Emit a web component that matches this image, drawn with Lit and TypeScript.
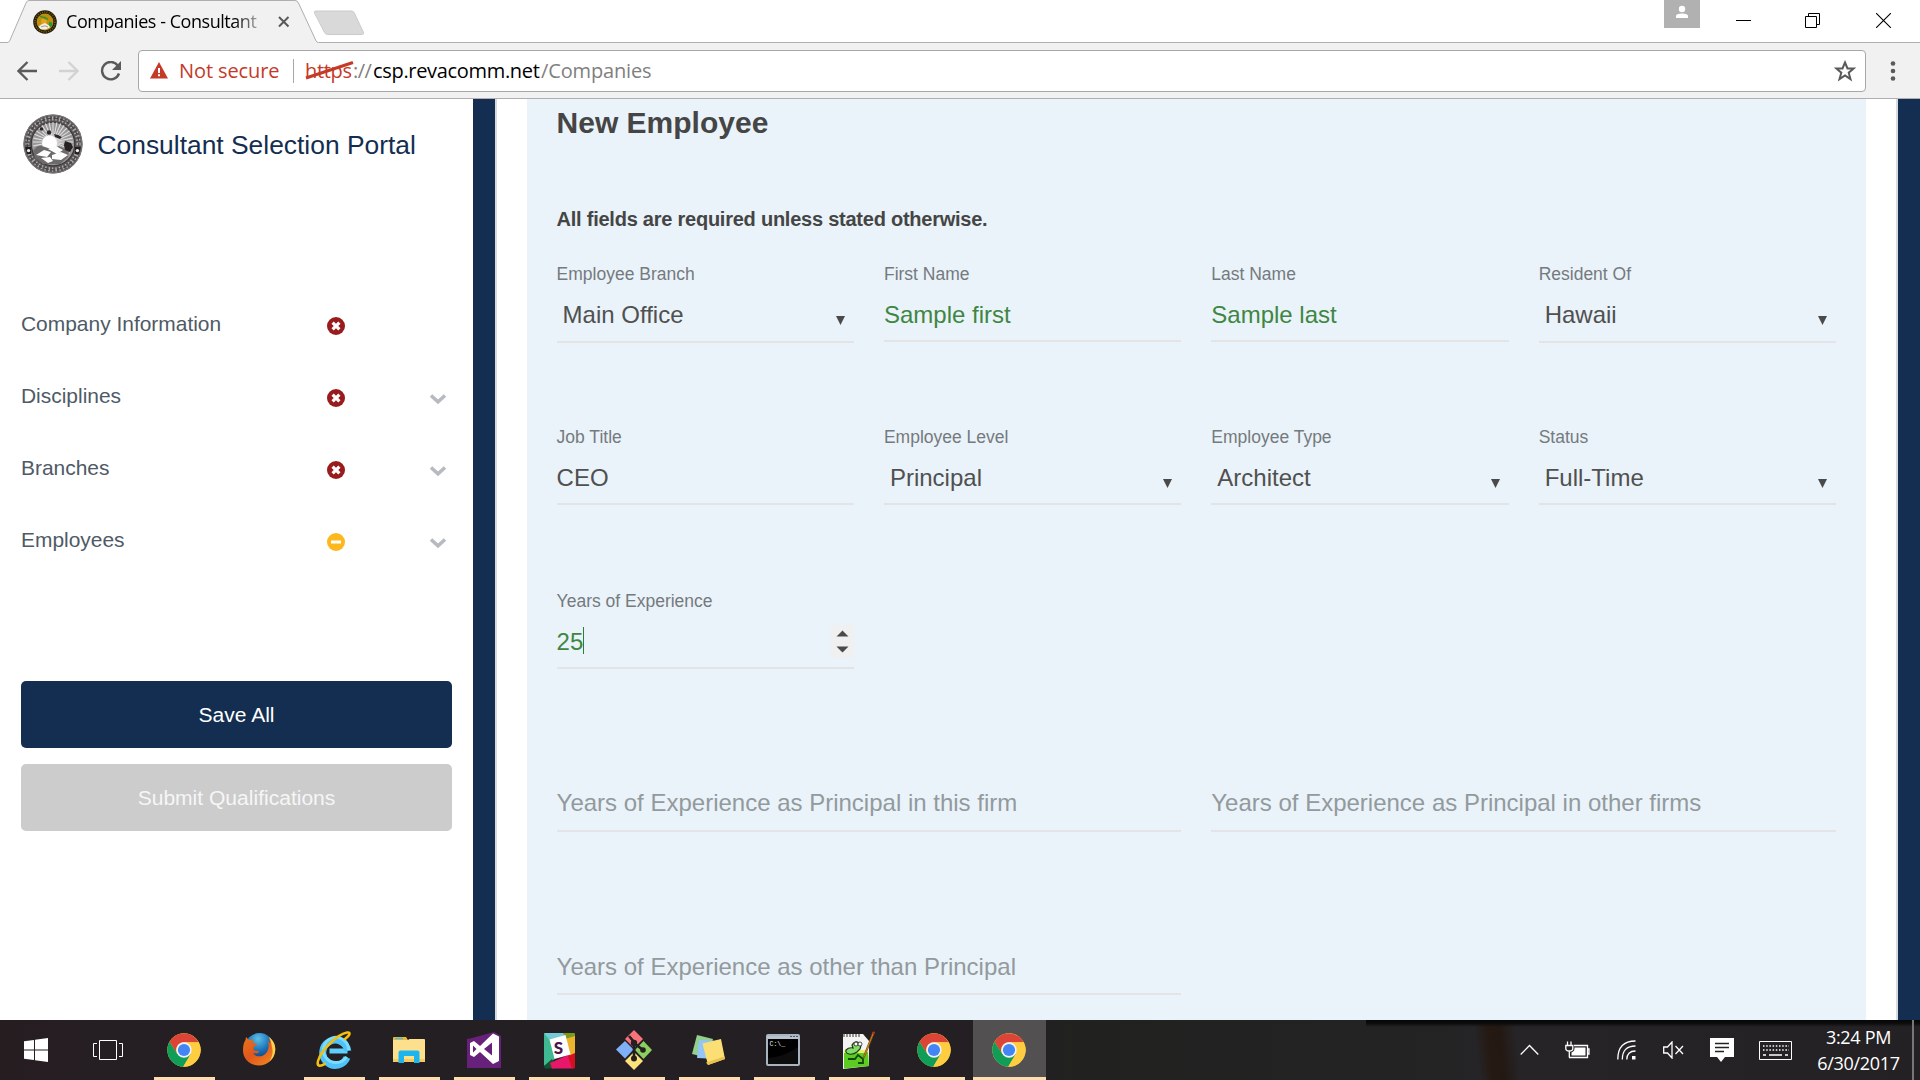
import { LitElement, html, svg, css, nothing } from "lit";
import { customElement, property } from "lit/decorators.js";
import { classMap } from "lit/directives/class-map.js";

/* ---------- artwork ---------- */

const rays = Array.from({ length: 32 }, (_, i) => {
  const a = (i * Math.PI) / 16;
  return svg`<line x1="30" y1="28" x2=${30 + 20 * Math.cos(a)} y2=${28 + 20 * Math.sin(a)} stroke="#dedede" stroke-width="1.1"/>`;
});

const seal = html`<svg width="60" height="60" viewBox="0 0 60 60">
  <circle cx="30" cy="30" r="29.6" fill="#5a5658"/>
  <circle cx="30" cy="30" r="25.6" fill="none" stroke="#aeacad" stroke-width="4.2" stroke-dasharray="1.5 2.1"/>
  <circle cx="30" cy="30" r="25.8" fill="none" stroke="#454143" stroke-width="1.2" stroke-dasharray="4 2.4"/>
  <circle cx="30" cy="30" r="29" fill="none" stroke="#7b797a" stroke-width="1"/>
  <circle cx="30" cy="30" r="21.8" fill="#989697" stroke="#3d393b" stroke-width="1.3"/>
  ${rays}
  <circle cx="26.5" cy="29" r="7.5" fill="#fff"/>
  <path d="M10 37q4-6 9-5l9 3 8-3 10 5-1 6-8 7H20l-8-6z" fill="#6d6a6c"/>
  <path d="M13 41l8-5 7 2-4 5zM25 35l8-3 7 4-6 4zM29 41l9-3 7 3-7 5-9-1zM18 44l9-1 3 4-5 2z" fill="#fdfdfd"/>
  <path d="M42 27l6 2 2 4-3 5-5-2-1-5z" fill="#262224"/>
  <circle cx="18.5" cy="15" r="1.8" fill="#2c282a"/><circle cx="26" cy="18.5" r="2.2" fill="#2c282a"/>
  <path d="M31 20l4 1 4 2-2 2-5-2z" fill="#2c282a"/>
  <path d="M2 33h6v7H4zM52 33h6l-2 7h-4z" fill="#221e20"/>
  <circle cx="5.6" cy="36.6" r="1.7" fill="#eee"/><circle cx="54.4" cy="36.6" r="1.7" fill="#eee"/>
</svg>`;

const favicon = html`<svg width="24" height="24" viewBox="0 0 24 24">
  <circle cx="12" cy="12" r="11.8" fill="#221c08"/>
  <circle cx="12" cy="12" r="10" fill="none" stroke="#7a6518" stroke-width="1.6" stroke-dasharray="1 1.3"/>
  <circle cx="12" cy="12" r="8.4" fill="#c08f10"/>
  <circle cx="11" cy="11.5" r="3" fill="#e2a51c"/>
  <path d="M7 6.2l3 1 3 1.6M11 7l4 2.3" stroke="#3f8f2c" stroke-width="1.5" fill="none"/>
  <path d="M16 12l3 .4.6 2.6-2 2-1.8-1.8z" fill="#1e9a3a"/>
  <path d="M5.5 16.5l3.5-2.2 3-1.3 4 2.4 1 2-4.5 2.2-5-.4z" fill="#f2f0e8"/>
  <path d="M8 16.8l4-1 3 1.2" stroke="#8a8578" stroke-width=".8" fill="none"/>
</svg>`;

const chrome = html`<svg width="36" height="36" viewBox="0 0 36 36">
  <circle cx="18" cy="18" r="16.7" fill="#ffcd40"/>
  <path d="M3.5 9.7A16.7 16.7 0 0 1 32.6 10.2H18a7.8 7.8 0 0 0-6.8 11.7z" fill="#db4437"/>
  <path d="M3.5 9.7A16.7 16.7 0 0 0 17.2 34.7L24.8 21.9 11.3 21.9z" fill="#0f9d58"/>
  <path d="M17.2 34.7A16.7 16.7 0 0 0 32.6 10.2H18l6.8 11.7z" fill="#ffcd40"/>
  <circle cx="18" cy="18" r="7.7" fill="#f1f1f1"/><circle cx="18" cy="18" r="6.1" fill="#4285f4"/>
</svg>`;

const firefox = html`<svg width="36" height="36" viewBox="0 0 36 36">
  <defs>
    <linearGradient id="ffg" x1="0" y1="0" x2="0.9" y2="1"><stop offset="0" stop-color="#e8741c"/><stop offset=".5" stop-color="#e2571c"/><stop offset="1" stop-color="#f08a20"/></linearGradient>
    <radialGradient id="ffb" cx=".45" cy=".2" r=".8"><stop offset="0" stop-color="#5fc0ea"/><stop offset=".5" stop-color="#1c72b8"/><stop offset="1" stop-color="#0d2f66"/></radialGradient>
  </defs>
  <circle cx="18.5" cy="15.5" r="14.5" fill="url(#ffb)"/>
  <path d="M28 5c5 4 7 9 6 15-1.500 8-8 13.500-16 13.500C9 33.500 2 27 2 18.500 2 13 3 10 4.500 8L5 5l3 3c2-.8 3.500-.7 5 0-1 .8-1.700 1.800-1.600 3l4.600.7c.3 1.300-2.500 2.500-3.500 3.300.6 1.800 0 2.600 0 3.500 2-.8 4 .9 6 1-1.500 2-4.500 2.300-6.500 1.300 2.500 4.600 9 4.500 12.500 1 3.500-3.600 4-9 2-12.500 1 .5 2 1.500 2.500 2.500C29 9.500 28.500 7 28 5z" fill="url(#ffg)"/>
  <path d="M28 5c5 4 7 9 6 15-.7 4-2.700 7.200-5.500 9.500 3-5 4-10 2.200-15.500C30.500 11 29.500 8 28 5z" fill="#fbd24b"/>
</svg>`;

const ie = html`<svg width="38" height="38" viewBox="0 0 38 38">
  <path d="M32.500 20H14.500" stroke="#5fd0fb" stroke-width="5"/>
  <path d="M32 26.500A12.600 12.600 0 1 1 32.800 20" fill="none" stroke="#4fc3f7" stroke-width="7"/>
  <path d="M31.600 25.800A12.600 12.600 0 1 1 33.600 19" fill="none" stroke="#7adcff" stroke-width="3"/>
  <path d="M30 8c6-5 5.500-7 2-6.500C23 3 6 19 3 30c-1.400 5 1.500 6 7 2.800" fill="none" stroke="#f4bf0e" stroke-width="2.500" stroke-linecap="round"/>
</svg>`;

const folder = html`<svg width="36" height="34" viewBox="0 0 36 34">
  <path d="M2 5q0-1 1-1h12l2 3h-15z" fill="#f0b92f"/><path d="M2 7h15l1.500-1H33q1 0 1 1v21q0 1-1 1H3q-1 0-1-1z" fill="#fde08d"/>
  <path d="M4 5.500h8" stroke="#4bb9e8" stroke-width="1.500"/><path d="M2 26h32v3H2z" fill="#f2cb62"/>
  <path d="M7.500 30V19.500q0-2 2-2h17q2 0 2 2V30h-5.500v-7H13v7z" fill="#1cb5ef"/>
</svg>`;

const visualStudio = html`<svg width="36" height="38" viewBox="0 0 36 38">
  <path d="M1 8l5-1L28 1l7 4v32H1z" fill="#68217a"/>
  <path fill-rule="evenodd" d="M4 12l4-2 6 5L27 2.500l6 3V30l-6 3-13-12-6 5-4-2zM7 14.500v7l3.500-3.500zM26 11.500L18 18l8 6.500z" fill="#fff"/>
</svg>`;

const slack = html`<svg width="33" height="37" viewBox="0 0 33 37">
  <path d="M1 2q0-1 1-1h19l2 5L7 10 1 18z" fill="#74cbd6"/><path d="M20 1h11q1 0 1 1v4l-9 3z" fill="#7e9a1d"/>
  <path d="M22 7l10-3v21l-6 1z" fill="#ecb32d"/><path d="M1 1l7 9 4 17-11 7z" fill="#3eb991"/>
  <path d="M1 34l8-7 5 9.500H2z" fill="#14532f"/><path d="M7 31l20-9 3 14.500H9z" fill="#e9176a"/><path d="M25 24l7-3v14q0 1.500-1 1.500h-2z" fill="#d4101f"/>
  <path d="M6.500 7.500l16-4.500 5 19.500-16 4.500z" fill="#fff"/><text x="10.800" y="22" class="s">S</text>
</svg>`;

const git = html`<svg width="38" height="42" viewBox="0 0 38 42">
  <path d="M19 1l9 9-9 9-9-9z" fill="#f9737a"/><path d="M10 12l8.500 8.500L10 29.500 1 20.500z" fill="#7fb1f9"/>
  <path d="M28.500 12l8.500 9-8.500 9L20 21z" fill="#8bd05f"/><path d="M19 23l9 9-9 9-9-9z" fill="#fbe27a"/>
  <path d="M14 7l5 6v15M19 14l9 7" stroke="#241f22" stroke-width="2.600" fill="none"/>
  <circle cx="19" cy="14" r="3.200" fill="#241f22"/><circle cx="28" cy="21" r="2.800" fill="#241f22"/><circle cx="19" cy="29.500" r="3" fill="#241f22"/>
</svg>`;

const notes = html`<svg width="38" height="34" viewBox="0 0 38 34">
  <path d="M7 2l16 4-5 19-16-4z" fill="#93cf8d"/><path d="M9 7l19 1-1 18-20-1z" fill="#93c6f6"/>
  <path d="M12.500 10.500L31 6l4 20-17 6z" fill="#fbdf75"/><path d="M16 29.500L34.500 23.500 35 26l-17 6z" fill="#e9c04c"/>
</svg>`;

const terminal = html`<svg width="36" height="32" viewBox="0 0 36 32">
  <rect x="1" y="1" width="32" height="30" rx="1" fill="#000" stroke="#a9b4bf" stroke-width="2"/><path d="M1 2h32v3H1z" fill="#b8c2cc"/>
  <path d="M24 2.500h2m1 0h2m1 0h2" stroke="#556"/><text x="3.500" y="12" class="p">C:\\_</text>
  <path d="M2 24q16-1 30-11v17H2z" fill="#fff" opacity=".05"/>
</svg>`;

const notepad = html`<svg width="36" height="40" viewBox="0 0 36 40">
  <path d="M2 4h20l6 7v25L2 39z" fill="#f4f4f2"/><path d="M3 4v3m3-3v3m3-3v3m3-3v3m3-3v3m3-3v3" stroke="#555" stroke-width="1.200"/>
  <path d="M3 22h24l1 14-25 2.500z" fill="#5ccb22"/><path d="M3 21.500h23" stroke="#e9ef6a" stroke-width="3"/>
  <path d="M11 15q3-5 7-2 3 1 1 6l-3 3q-4 3-8 2-4-1-3-4 3-3 7-2z" fill="#86d96b" stroke="#1b3d12" stroke-width="1.200"/>
  <circle cx="15" cy="14" r="2" fill="#fff" stroke="#222" stroke-width=".8"/><circle cx="19" cy="14" r="2" fill="#fff" stroke="#222" stroke-width=".8"/>
  <path d="M7 29h7l3-4 5 4v4h-5" stroke="#124a0c" stroke-width="1.800" fill="none"/>
  <path d="M33.500 2L24 26l-1.500 3 .3-3.500L32 2z" fill="#f0a020" stroke="#7a4a10" stroke-width=".8"/><path d="M32 1.500l2 .8-1 2.500-2-.8z" fill="#c03020"/>
</svg>`;

const startIcon = html`<svg width="24" height="24" viewBox="0 0 24 24"><path d="M0 3.300L10 2v9.500H0zM11 1.800L24 0v11.500H11zM0 12.500h10V22L0 20.700zM11 12.500h13V24l-13-1.800z" fill="#fff"/></svg>`;
const taskView = html`<svg width="30" height="20" viewBox="0 0 30 20"><path d="M6.500.5h17v19h-17zM4 3.500H.5v13H4M26 3.500h3.500v13H26" fill="none" stroke="#fff"/></svg>`;

const apps = [
  { icon: chrome, open: true }, { icon: firefox, open: false }, { icon: ie, open: true }, { icon: folder, open: true },
  { icon: visualStudio, open: true }, { icon: slack, open: true }, { icon: git, open: true }, { icon: notes, open: true },
  { icon: terminal, open: true }, { icon: notepad, open: true }, { icon: chrome, open: true }, { icon: chrome, open: true, active: true },
];

/* ---------- browser frame ---------- */

@customElement("browser-bar")
class BrowserBar extends LitElement {
  static styles = css`
    :host { display: flex; flex-direction: column; height: 99px; flex: none; background: #f1f1f1; font-family: "Open Sans", "Noto Sans", sans-serif; color: #000; }
    svg { display: block; flex: none; }
    .strip { position: relative; display: flex; height: 43px; background: #fff; }
    .shape { position: absolute; left: 0; top: 0; }
    .tab { position: relative; display: flex; align-items: center; width: 290px; height: 43px; padding-left: 33px; box-sizing: border-box; }
    .name { width: 198px; margin-left: 9px; font-size: 18px; letter-spacing: -0.46px; line-height: 25px; white-space: nowrap; margin-top: -1px;
      -webkit-mask-image: linear-gradient(90deg, #000 168px, transparent 202px); }
    .x { margin-left: 15px; }
    .system { position: relative; display: flex; margin-left: auto; }
    .user { width: 36px; height: 28px; background: #b1b1b1; display: flex; justify-content: center; }
    .controls { display: flex; gap: 54px; padding: 13px 29px 0 36px; }
    .close { margin-left: 2px; }
    .toolbar { display: flex; align-items: center; height: 55px; border-bottom: 1px solid #b0aeb0; padding: 0 23px 0 17px; }
    .nav { display: flex; align-items: center; gap: 21.5px; width: 121px; }
    .address { display: flex; align-items: center; flex: 1; height: 40px; border: 1px solid #a9a7a8; border-radius: 4px; background: #fff; font-size: 20px; white-space: nowrap; padding-right: 9px; }
    .address svg.warn { margin-left: 11px; }
    .ns { color: #c53929; width: 114px; margin-left: 11px; letter-spacing: -0.1px; flex: none; }
    .sep { width: 1px; height: 24px; background: #a8a8a8; margin-right: 11px; }
    .https { position: relative; width: 48px; color: #c53929; letter-spacing: -0.3px; }
    .strike { position: absolute; left: 0; top: 3px; }
    .slash { width: 20px; color: #808080; letter-spacing: -0.6px; }
    .host { width: 168px; letter-spacing: -0.32px; }
    .path { color: #808080; letter-spacing: -0.15px; }
    .star { margin-left: auto; }
    .dots { margin-left: 23px; }
  `;
  render() {
    return html`
      <div class="strip">
        <svg class="shape" width="1920" height="43" viewBox="0 0 1920 43">
          <path d="M0 43V42.500H7q2 0 2.700-1.700L26 3q1-2.500 3-2.500H295q2.500 0 3.500 2.500L316 40.800q.8 1.700 2.500 1.700H1920V43z" fill="#f1f1f1"/>
          <path d="M0 42.500H7q2 0 2.700-1.700L26 3q1-2.500 3-2.500H295q2.500 0 3.500 2.500L316 40.800q.8 1.700 2.500 1.700H1920" fill="none" stroke="#b0aeb0"/>
          <path d="M316 11h35.500q2 0 2.800 2l9 19q1 2.500-1 2.500H327.500q-2 0-3-2L314.500 13q-1-2 1.500-2z" fill="#d9d9d9" stroke="#cbcbcb"/>
        </svg>
        <div class="tab">${favicon}<div class="name">Companies - Consultant</div>
          <svg class="x" width="12" height="12" viewBox="0 0 12 12"><path d="M1 1l9.500 9.500M10.500 1L1 10.500" stroke="#5a5a5a" stroke-width="2"/></svg>
        </div>
        <div class="system">
          <div class="user"><svg width="12" height="20" viewBox="0 0 12 20"><circle cx="6" cy="9" r="3.200" fill="#fff"/><path d="M0 18v-2q0-2.500 6-2.500t6 2.500v2z" fill="#fff"/></svg></div>
          <div class="controls">
            <svg width="15" height="15" viewBox="0 0 15 15"><path d="M0 7.500h15" stroke="#000"/></svg>
            <svg width="15" height="15" viewBox="0 0 15 15"><path d="M.5 3.500h11v11H.5zM3.500 3V.5h11v11H12" fill="none" stroke="#000"/></svg>
            <svg class="close" width="15" height="15" viewBox="0 0 15 15"><path d="M0 0l15 15M15 0L0 15" stroke="#000" stroke-width="1.100"/></svg>
          </div>
        </div>
      </div>
      <div class="toolbar">
        <div class="nav">
          <svg width="20" height="20" viewBox="0 0 20 20"><path d="M20 10H2M10.500 1L1.500 10l9 9" fill="none" stroke="#5a5a5a" stroke-width="2.300"/></svg>
          <svg width="20" height="20" viewBox="0 0 20 20"><path d="M0 10h18M9.500 1l9 9-9 9" fill="none" stroke="#d2d2d2" stroke-width="2.300"/></svg>
          <svg width="22" height="20" viewBox="0 0 22 20"><path d="M18 4.800A8.700 8.700 0 1 0 19 12.500" fill="none" stroke="#5a5a5a" stroke-width="2.400"/><path d="M21 0v9h-9z" fill="#5a5a5a"/></svg>
        </div>
        <div class="address">
          <svg class="warn" width="18" height="17" viewBox="0 0 18 17"><path d="M9 0l9 16.500H0z" fill="#c53929"/><path d="M9 6v5M9 12.200v2" stroke="#fff" stroke-width="2"/></svg>
          <span class="ns">Not secure</span><span class="sep"></span>
          <span class="https">https<svg class="strike" width="50" height="20" viewBox="0 0 50 20"><path d="M1 18L48 2.500" stroke="#c53929" stroke-width="3"/></svg></span>
          <span class="slash">://</span><span class="host">csp.revacomm.net</span><span class="path">/Companies</span>
          <svg class="star" width="22" height="22" viewBox="0 0 22 22"><path d="M11 2.500l2.500 6h6.200l-5 4.200 1.800 6.400L11 15.400l-5.500 3.700 1.800-6.400-5-4.200h6.200z" fill="none" stroke="#5a5a5a" stroke-width="2"/></svg>
        </div>
        <svg class="dots" width="8" height="20" viewBox="0 0 8 20"><g fill="#5a5a5a"><circle cx="4" cy="2.500" r="2.300"/><circle cx="4" cy="10" r="2.300"/><circle cx="4" cy="17.500" r="2.300"/></g></svg>
      </div>`;
  }
}

/* ---------- sidebar ---------- */

type Status = "error" | "partial";

@customElement("portal-sidebar")
class PortalSidebar extends LitElement {
  static styles = css`
    :host { display: flex; flex-direction: column; width: 473px; flex: none; background: #fff; box-sizing: border-box; padding: 15px 21px 0; font-family: "Liberation Sans", Arial, sans-serif; }
    svg { display: block; }
    .brand { display: flex; align-items: center; height: 60px; margin-left: 2px; }
    .title { margin-left: 14.5px; font-size: 26.4px; color: #132e51; white-space: nowrap; padding-top: 2px; }
    .nav { display: flex; flex-direction: column; margin-top: 114px; height: 393px; }
    .item { display: grid; grid-template-columns: 306px 94px 1fr; align-items: center; height: 72px; font-size: 20.95px; color: #4f5a66; }
    .label { padding-bottom: 1px; }
    .state { padding-top: 3px; }
    .chev { padding-top: 6px; margin-left: 8px; }
    .btn { height: 67px; border-radius: 5px; display: flex; align-items: center; justify-content: center; font-size: 21.05px; color: #fff; background: #132e51; margin-bottom: 16px; }
    .off { background: #ccc; color: #f6f6f6; }
  `;
  items: { name: string; status: Status; sub: boolean }[] = [
    { name: "Company Information", status: "error", sub: false },
    { name: "Disciplines", status: "error", sub: true },
    { name: "Branches", status: "error", sub: true },
    { name: "Employees", status: "partial", sub: true },
  ];
  render() {
    return html`
      <div class="brand">${seal}<div class="title">Consultant Selection Portal</div></div>
      <div class="nav">${this.items.map((i) => html`<div class="item">
        <span class="label">${i.name}</span>
        <svg class="state" width="18" height="18" viewBox="0 0 18 18">
          <circle cx="9" cy="9" r="9" fill=${i.status === "error" ? "#981b1e" : "#fdb81e"}/>
          ${i.status === "error"
            ? svg`<path d="M5.600 5.600l6.800 6.800M12.400 5.600l-6.800 6.800" stroke="#fff" stroke-width="3.200"/>`
            : svg`<path d="M4 9h10" stroke="#fff" stroke-width="3"/>`}
        </svg>
        ${i.sub ? html`<svg class="chev" width="18" height="12" viewBox="0 0 18 12"><path d="M2 2.500L9 8.800l7-6.300" fill="none" stroke="#b7bac0" stroke-width="3.600"/></svg>` : nothing}
      </div>`)}</div>
      <div class="btn">Save All</div>
      <div class="btn off">Submit Qualifications</div>`;
  }
}

/* ---------- form ---------- */

@customElement("form-field")
class FormField extends LitElement {
  @property() label = "";
  @property() value = "";
  @property() kind = "text";
  @property({ type: Boolean }) valid = false;
  @property({ type: Boolean }) low = false;
  static styles = css`
    :host { display: block; color: #505050; font-size: 24px; }
    .label { height: 20px; line-height: 20px; font-size: 17.5px; color: #757a7e; white-space: nowrap; }
    .box { display: flex; justify-content: space-between; height: 39.5px; margin-top: 16.500px; border-bottom: 2px solid #e4e4e6; line-height: 28px; white-space: nowrap; }
    .low { height: 40.5px; }
    .valid { color: #3f8643; }
    .select { padding-left: 6px; }
    .number { line-height: 29px; }
    .hint { color: #929a9d; line-height: 25px; }
    .arrow { margin: 15px 9px 0 0; }
    .entry { display: flex; }
    .caret { width: 1px; height: 27px; background: #2e7d32; }
    .spin { width: 23px; height: 33px; margin-top: -2px; background: #f0f0f0; }
    svg { display: block; }
  `;
  render() {
    const c = classMap({ box: true, valid: this.valid, select: this.kind === "select", number: this.kind === "number", hint: this.kind === "hint", low: this.low });
    return html`<div class="label">${this.label}</div>
      <div class=${c}><span class="entry">${this.value}${this.kind === "number" ? html`<i class="caret"></i>` : nothing}</span>
        ${this.kind === "select" ? html`<svg class="arrow" width="9" height="9" viewBox="0 0 9 9"><path d="M0 0h9L4.500 9z" fill="#4a4a4a"/></svg>` : nothing}
        ${this.kind === "number" ? html`<svg class="spin" viewBox="0 0 23 33"><path d="M5.500 11.500L11.500 5.500l6 6zM5.500 21.500l6 6 6-6z" fill="#4a4a4a"/></svg>` : nothing}
      </div>`;
  }
}

@customElement("employee-form")
class EmployeeForm extends LitElement {
  static styles = css`
    :host { display: block; width: 1339px; flex: none; box-sizing: border-box; padding: 0 30px 0 29.6px; background: #eaf3f9; overflow: hidden; font-family: "Liberation Sans", Arial, sans-serif; color: #454545; }
    .title { margin: 0; padding-top: 6px; height: 36px; line-height: 36px; font-size: 30px; font-weight: bold; }
    .note { margin: 66px 0 32px; height: 25px; line-height: 25px; font-size: 20px; letter-spacing: -0.24px; font-weight: bold; }
    .grid { display: grid; grid-template-columns: repeat(4, minmax(0, 1fr)); column-gap: 30px; grid-auto-rows: 163.3px; }
    .wide { grid-column: span 2; }
    .alone { grid-column: 1; }
    .wide.alone { grid-column: 1 / span 2; }
  `;
  render() {
    return html`<h1 class="title">New Employee</h1>
      <p class="note">All fields are required unless stated otherwise.</p>
      <div class="grid">
        <form-field label="Employee Branch" value="Main Office" kind="select" low></form-field>
        <form-field label="First Name" value="Sample first" valid></form-field>
        <form-field label="Last Name" value="Sample last" valid></form-field>
        <form-field label="Resident Of" value="Hawaii" kind="select" low></form-field>
        <form-field label="Job Title" value="CEO"></form-field>
        <form-field label="Employee Level" value="Principal" kind="select"></form-field>
        <form-field label="Employee Type" value="Architect" kind="select"></form-field>
        <form-field label="Status" value="Full-Time" kind="select"></form-field>
        <form-field class="alone" label="Years of Experience" value="25" kind="number" valid></form-field>
        <form-field class="wide alone" value="Years of Experience as Principal in this firm" kind="hint"></form-field>
        <form-field class="wide" value="Years of Experience as Principal in other firms" kind="hint"></form-field>
        <form-field class="wide alone" value="Years of Experience as other than Principal" kind="hint"></form-field>
      </div>`;
  }
}

/* ---------- taskbar ---------- */

@customElement("task-bar")
class TaskBar extends LitElement {
  static styles = css`
    :host { display: flex; height: 60px; flex: none; color: #fff; font-family: "Open Sans", "Noto Sans", sans-serif;
      background: linear-gradient(180deg, #050706 0, #0b0b0b 3px, transparent 7px) 1366px 0 / 554px 60px no-repeat,
        linear-gradient(84deg, transparent 1472px, #251913 1485px, #231812 1496px, transparent 1512px),
        linear-gradient(90deg, #261d21 0, #241f23 200px, #241f23 1000px, #212220 1080px, #222322 1390px, #262427 1500px, #242124 1920px); }
    svg { display: block; flex: none; }
    .start { display: flex; align-items: center; gap: 45px; padding: 0 23.500px 0 24px; }
    .app { width: 75px; height: 60px; display: flex; flex-direction: column; align-items: center; }
    .pic { height: 57px; padding-top: 3px; box-sizing: border-box; display: flex; align-items: center; }
    .line { width: 61px; height: 3px; background: #fddcae; }
    .active { background: #525051; width: 73px; margin-left: 1px; }
    .active .line { width: 73px; }
    .tray { display: flex; align-items: center; margin-left: auto; }
    .up { margin-right: 26px; } .bat { margin-right: 27px; } .wifi { margin-right: 27px; } .vol { margin-right: 26px; } .act { margin-right: 25px; }
    .clock { width: 134px; box-sizing: border-box; padding: 0 1px 1px 0; text-align: center; font-size: 18px; line-height: 26px; letter-spacing: -0.3px; }
    .edge { width: 2px; height: 60px; background: #77777a; margin-right: 6px; margin-left: -14px; }
    .s { font: 900 17px "Lato", sans-serif; fill: #4a154b; }
    .p { font: 6.500px "Liberation Mono", monospace; fill: #e8e8e8; }
  `;
  render() {
    return html`
      <div class="start">${startIcon}${taskView}</div>
      ${apps.map((a) => html`<div class=${classMap({ app: true, active: !!a.active })}><div class="pic">${a.icon}</div>${a.open ? html`<div class="line"></div>` : nothing}</div>`)}
      <div class="tray">
        <svg class="up" width="19" height="12" viewBox="0 0 19 12"><path d="M.7 10.500L9.500 1.500l8.800 9" fill="none" stroke="#fff" stroke-width="1.300"/></svg>
        <svg class="bat" width="25" height="18" viewBox="0 0 25 18"><path d="M4 16.500h18.500V4.500H9M22.500 8h1.500v5h-1.500M2.500.5V4M6 .5V4M.8 4.500h7v3q0 2.500-3.500 2.500T.8 7.500zM4.300 10v6.500" fill="none" stroke="#fff" stroke-width="1.300"/><path d="M9.500 6.500h11v8H6.500v-3q3-1.500 3-3.500z" fill="#fff"/></svg>
        <svg class="wifi" width="19" height="20" viewBox="0 0 19 20"><g fill="none" stroke="#fff" stroke-width="1.300"><path d="M.8 19.500Q.8 1 18.500 1"/><path d="M5.300 19.500Q5.300 6 18.500 6"/><path d="M9.800 19.500Q9.800 11 18.500 11"/></g><path d="M15 16h3.500v3.500H15z" fill="#fff"/></svg>
        <svg class="vol" width="21" height="18" viewBox="0 0 21 18"><path d="M.7 6h3.800L9 1v16l-4.500-5H.7zM12.500 5l7.500 8M20 5l-7.500 8" fill="none" stroke="#fff" stroke-width="1.300"/></svg>
        <svg class="act" width="24" height="24" viewBox="0 0 24 24"><path d="M0 0h24v19H15l-4 5-4-5H0z" fill="#fff"/><path d="M5 5.500h14M5 9.500h14M5 13.500h9" stroke="#242124" stroke-width="1.300"/></svg>
        <svg width="33" height="19" viewBox="0 0 33 19"><path d="M.5.500h32v18H.5z" fill="none" stroke="#fff"/><path d="M4 5h26M4 9h26" stroke="#fff" stroke-width="1.300" stroke-dasharray="1.500 1.700"/><path d="M4 14h3m3 0h13m3 0h3" stroke="#fff" stroke-width="1.300"/></svg>
        <div class="clock"><div>3:24 PM</div><div>6/30/2017</div></div>
        <div class="edge"></div>
      </div>`;
  }
}

/* ---------- page ---------- */

@customElement("app-root")
class AppRoot extends LitElement {
  static styles = css`
    :host { display: flex; flex-direction: column; width: 1920px; height: 1080px; overflow: hidden; background: #fff; }
    .page { display: flex; flex: 1; min-height: 0; overflow: hidden; background: #132e51; }
    .sheet { display: flex; margin-left: 22px; width: 1403px; padding-left: 30px; box-sizing: border-box; background: #fff; border: 0 solid #d8dadd; border-left-width: 2px; border-right-width: 2px; }
  `;
  render() {
    return html`<browser-bar></browser-bar>
      <div class="page"><portal-sidebar></portal-sidebar><div class="sheet"><employee-form></employee-form></div></div>
      <task-bar></task-bar>`;
  }
}
